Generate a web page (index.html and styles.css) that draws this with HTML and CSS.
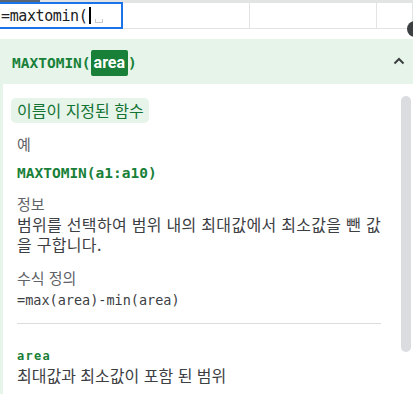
FILE: index.html
```html
<!DOCTYPE html>
<html lang="ko">
<head>
    <meta charset="UTF-8">
    <title>MAXTOMIN</title>
    <link rel="stylesheet" href="styles.css">
</head>
<body>

    <!-- строка таблицы с редактором ячейки -->
    <div class="sheet-row">
        <div class="row-top">
            <span class="row-mark"></span>
        </div>
        <div class="cells">
            <div class="cell-editor">
                <span class="formula-input">=maxtomin(</span><span class="caret"></span><span class="space-mark"></span>
            </div>
            <div class="cell cell-b"></div>
            <div class="cell cell-c"></div>
            <div class="cell cell-d"></div>
        </div>
        <span class="fab-dot"></span>
    </div>

    <!-- подсказка по формуле -->
    <div class="help-card">
        <div class="help-header">
            <span class="signature">MAXTOMIN(<span class="arg-active">area</span>)</span>
            <svg class="chevron" width="12" height="8" viewBox="0 0 12 8">
                <path d="M1.5 6.5 L6 2 L10.5 6.5" fill="none" stroke="#3c4043" stroke-width="2"/>
            </svg>
        </div>

        <div class="help-body">
            <span class="chip">이름이 지정된 함수</span>

            <div class="label label-example">예</div>
            <div class="example">MAXTOMIN(a1:a10)</div>

            <div class="label label-info">정보</div>
            <p class="desc">범위를 선택하여 범위 내의 최대값에서 최소값을 뺀 값을 구합니다.</p>

            <div class="label label-def">수식 정의</div>
            <div class="definition">=max(area)-min(area)</div>

            <div class="divider"></div>

            <div class="arg-name">area</div>
            <div class="arg-desc">최대값과 최소값이 포함 된 범위</div>

            <div class="scrollbar"></div>
        </div>
    </div>

</body>
</html>
```

FILE: styles.css
```css
body {
    margin: 0; /* без отступов */
    background-color: #ffffff;
    font-family: "Noto Sans CJK KR", Roboto, sans-serif;
    color: #3c4043;
    overflow: hidden;
}

/* ---- строка таблицы ---- */
.sheet-row {
    position: relative;
    height: 29px;
}

.row-top {
    height: 3px;
    background-color: #e2e3e3;
}

.row-mark {
    display: block;
    width: 40px;
    height: 2px;
    background-color: #5b6675;
}

.cells {
    display: flex;
    height: 26px;
    border-bottom: 1px solid #e2e3e3;
    box-sizing: border-box;
}

.cell-editor {
    width: 123px;
    border: 2px solid #1a73e8;
    border-left: none;
    box-sizing: border-box;
    display: flex;
    align-items: center;
    padding-left: 1px;
    margin-top: -1px;
    height: 27px;
}

.formula-input {
    font-family: "DejaVu Sans Mono", monospace;
    font-size: 15px;
    color: #202124;
    letter-spacing: -0.4px;
}

.caret {
    width: 2px;
    height: 17px;
    background-color: #000000;
    margin-left: 2px;
}

.space-mark {
    width: 6px;
    height: 3px;
    border: 1px solid #c8cacc;
    border-top: none;
    margin: 10px 0 0 4px;
}

.cell {
    border-right: 1px solid #e2e3e3;
}

.cell-b {
    width: 126px;
}

.cell-c {
    width: 126px;
}

.cell-d {
    flex: 1;
}

.fab-dot {
    position: absolute;
    right: -10px;
    top: 21px;
    width: 16px;
    height: 16px;
    border-radius: 50%;
    background-color: #3c4043;
}

/* ---- карточка подсказки ---- */
.help-card {
    margin-top: 10px;
    border-bottom: 5px solid #e6f4ea;
}

.help-header {
    height: 45px;
    background-color: #e6f4ea;
    display: flex;
    align-items: center;
    justify-content: space-between;
    padding: 0 8px 0 12px;
}

.signature {
    font-family: "DejaVu Sans Mono", monospace;
    font-weight: bold;
    font-size: 14.5px;
    color: #188038;
    margin-top: 2px;
}

.arg-active {
    font-family: Roboto, sans-serif;
    font-weight: bold;
    font-size: 16px;
    color: #ffffff;
    background-color: #188038;
    border-radius: 2px;
    padding: 3px 3px 4px;
}

.chevron {
    display: block;
    margin-bottom: 2px;
}

.help-body {
    position: relative;
    height: 301px;
    border-left: 3px solid #e6f4ea;
    padding: 14px 32px 0 14px;
    overflow: hidden;
}

.chip {
    display: inline-block;
    margin-left: -6px;
    padding: 0 5px 0 6px;
    height: 25px;
    line-height: 25px;
    border-radius: 5px;
    background-color: #e6f4ea;
    color: #137333;
    font-size: 16px;
}

.label {
    font-size: 15px;
    color: #5f6368;
    line-height: 18px;
}

.label-example {
    margin-top: 12px;
}

.example {
    font-family: "DejaVu Sans Mono", monospace;
    font-weight: bold;
    font-size: 14.5px;
    color: #188038;
    margin-top: 11px;
    line-height: 18px;
}

.label-info {
    margin-top: 13px;
}

.desc {
    margin: 1px -10px 0 0;
    font-size: 16px;
    line-height: 20px;
    letter-spacing: 0.3px;
    color: #3c4043;
}

.label-def {
    margin-top: 15px;
}

.definition {
    font-family: "DejaVu Sans Mono", monospace;
    font-size: 13.5px;
    color: #3c4043;
    margin-top: 4px;
    line-height: 18px;
}

.divider {
    border-top: 1px solid #dadce0;
    margin-top: 14px;
}

.arg-name {
    font-family: "DejaVu Sans Mono", monospace;
    font-weight: bold;
    font-size: 12px;
    letter-spacing: 1.3px;
    color: #188038;
    margin-top: 25px;
    line-height: 14px;
}

.arg-desc {
    font-size: 16px;
    line-height: 20px;
    margin-top: 2px;
    color: #3c4043;
}

.scrollbar {
    position: absolute; /* поверх содержимого */
    right: 2px;
    top: 12px;
    width: 10px;
    height: 256px;
    border-radius: 5px;
    background-color: #dadce0;
}
```
